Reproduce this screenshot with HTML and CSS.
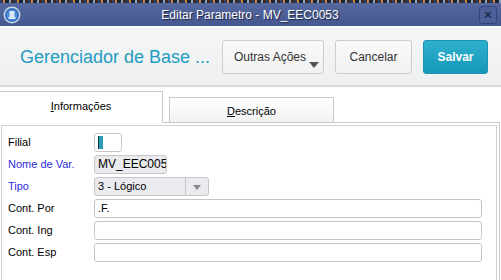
FILE: index.html
```html
<!DOCTYPE html>
<html lang="pt">
<head>
  <meta charset="UTF-8" />
  <title>Editar Parametro - MV_EEC0053</title>
  <link rel="stylesheet" href="styles.css">
</head>
<body>
  <div class="window">
    <div class="strip"></div>
    <div class="titlebar">
      <span class="app-icon">
        <svg width="18" height="18" viewBox="0 0 18 18">
          <circle cx="9" cy="9" r="8.5" fill="#c9d6ea"/>
          <circle cx="9" cy="9" r="7" fill="#2f6fc0"/>
          <circle cx="9" cy="9" r="5.5" fill="#4a8ad6"/>
          <rect x="6.5" y="5" width="5" height="6" fill="#d9e6f6"/>
          <rect x="5.5" y="11" width="7" height="2" fill="#d9e6f6"/>
        </svg>
      </span>
      <span class="title">Editar Parametro - MV_EEC0053</span>
      <span class="close">&#215;</span>
    </div>

    <div class="header">
      <h1>Gerenciador de Base ...</h1>
      <div class="actions">
        <button class="btn btn-more">Outras Ações<span class="caret"></span></button>
        <button class="btn btn-cancel">Cancelar</button>
        <button class="btn btn-primary">Salvar</button>
      </div>
    </div>

    <div class="tabs">
      <div class="tab active"><u>I</u>nformações</div>
      <div class="tab"><u>D</u>escrição</div>
    </div>

    <div class="panel">
      <div class="panel-inner">
        <div class="row">
          <label>Filial</label>
          <div class="field field-filial"><span class="cursor"></span></div>
        </div>
        <div class="row">
          <label class="req">Nome de Var.</label>
          <div class="field field-name disabled">MV_EEC0053</div>
        </div>
        <div class="row">
          <label class="req">Tipo</label>
          <div class="field field-select disabled">
            <span class="value">3 - Lógico</span>
            <span class="arrow"></span>
          </div>
        </div>
        <div class="row">
          <label>Cont. Por</label>
          <div class="field field-wide">.F.</div>
        </div>
        <div class="row">
          <label>Cont. Ing</label>
          <div class="field field-wide"></div>
        </div>
        <div class="row">
          <label>Cont. Esp</label>
          <div class="field field-wide"></div>
        </div>
      </div>
    </div>
  </div>
</body>
</html>
```

FILE: styles.css
```css
body {
  margin: 0;
  font-family: Arial, "Liberation Sans", sans-serif;
  background-color: #ffffff;
}
.window {
  width: 501px;
  height: 280px;
  overflow: hidden;
}
.strip {
  height: 3px;
  background: repeating-linear-gradient(90deg, #2b3c5c 0 3px, #c9803a 3px 5px, #1b2433 5px 9px, #8aa0c4 9px 11px, #3a2b20 11px 14px);
}
.titlebar {
  height: 23px;
  display: flex;
  align-items: center;
  padding: 0 3px;
  background: linear-gradient(#5568a0, #44578f);
  border-bottom: 1px solid #ffffff;
}
.app-icon {
  width: 18px;
  height: 18px;
}
.title {
  flex: 1;
  text-align: center;
  color: #ffffff;
  font-size: 12px;
  text-shadow: 1px 1px 1px #1c2544;
}
.close {
  width: 16px;
  height: 16px;
  border: 1px solid #34457a;
  border-radius: 3px;
  background: #4d6097;
  color: #1f2a4d;
  font-size: 13px;
  font-weight: bold;
  line-height: 15px;
  text-align: center;
  margin-right: 1px;
}
.header {
  height: 58px;
  display: flex;
  align-items: center;
  padding: 0 13px 0 20px;
  background: linear-gradient(#f5f6f6, #eeeff0);
  border-bottom: 2px solid #d9d9d9;
}
h1 {
  margin: 0;
  font-size: 18px;
  font-weight: normal;
  color: #1f9cc3;
  padding-top: 2px;
  white-space: nowrap;
}
.actions {
  display: flex;
  gap: 11px;
  margin-top: 2px;
  margin-left: auto;
}
.btn {
  position: relative;
  height: 34px;
  padding: 0;
  border: 1px solid #cdcdcd;
  border-radius: 3px;
  background: linear-gradient(#fafafa, #f1f1f1);
  color: #333333;
  font-family: Arial, "Liberation Sans", sans-serif;
  font-size: 12px;
  white-space: nowrap;
  flex-shrink: 0;
}
.btn-more {
  width: 102px;
  text-align: left;
  padding-left: 11px;
}
.btn-cancel {
  width: 77px;
}
.caret {
  position: absolute;
  right: 4px;
  bottom: 5px;
  border-left: 5px solid transparent;
  border-right: 5px solid transparent;
  border-top: 6px solid #555555;
}
.btn-primary {
  width: 65px;
  border-color: #1b92b2;
  background: linear-gradient(#2fb0cd, #1598b9);
  color: #ffffff;
  font-weight: bold;
}
.tabs {
  display: flex;
  align-items: flex-end;
  height: 35px;
  background: #ffffff;
}
.tab {
  font-size: 11px;
  color: #000000;
  text-align: center;
}
.tab.active {
  width: 162px;
  height: 31px;
  line-height: 29px;
  border-top: 1px solid #c8c8c8;
  border-right: 1px solid #c8c8c8;
  background: #ffffff;
  margin-bottom: -1px;
  position: relative;
}
.tab:not(.active) {
  width: 163px;
  height: 24px;
  line-height: 26px;
  margin-left: 6px;
  border: 1px solid #c8c8c8;
  border-bottom: none;
  background: linear-gradient(#ffffff, #f2f2f2);
}
.panel {
  height: 160px;
  border-top: 1px solid #c8c8c8;
  border-right: 1px solid #c8c8c8;
  padding: 2px 2px 0 1px;
  margin-right: 1px;
}
.panel-inner {
  height: 100%;
  border: 1px solid #d0d0d0;
  border-bottom: none;
  padding: 5px 0 0 6px;
  box-sizing: border-box;
}
.row {
  display: flex;
  align-items: center;
  height: 22px;
}
label {
  width: 86px;
  font-size: 11px;
  color: #000000;
}
label.req {
  color: #2b2bd8;
}
.field {
  height: 17px;
  border: 1px solid #c6c6c6;
  border-radius: 3px;
  background: #ffffff;
  font-size: 11px;
  line-height: 17px;
  padding: 0 3px;
  box-sizing: content-box;
  color: #000000;
  overflow: hidden;
  white-space: nowrap;
}
.field.disabled {
  background: #e9ebef;
}
.field-filial {
  width: 20px;
}
.cursor {
  display: inline-block;
  width: 4px;
  height: 13px;
  margin-top: 2px;
  background: #2a9cb4;
  border-left: 1px solid #0b3340;
}
.field-name {
  width: 65px;
  font-size: 12px;
}
.field-select {
  width: 110px;
  display: flex;
  padding-right: 0;
}
.field-select .value {
  flex: 1;
}
.field-select .arrow {
  width: 22px;
  border-left: 1px solid #c6c6c6;
  position: relative;
}
.field-select .arrow::after {
  content: "";
  position: absolute;
  left: 7px;
  top: 7px;
  border-left: 4px solid transparent;
  border-right: 4px solid transparent;
  border-top: 5px solid #888888;
}
.field-wide {
  width: 380px;
}
```
